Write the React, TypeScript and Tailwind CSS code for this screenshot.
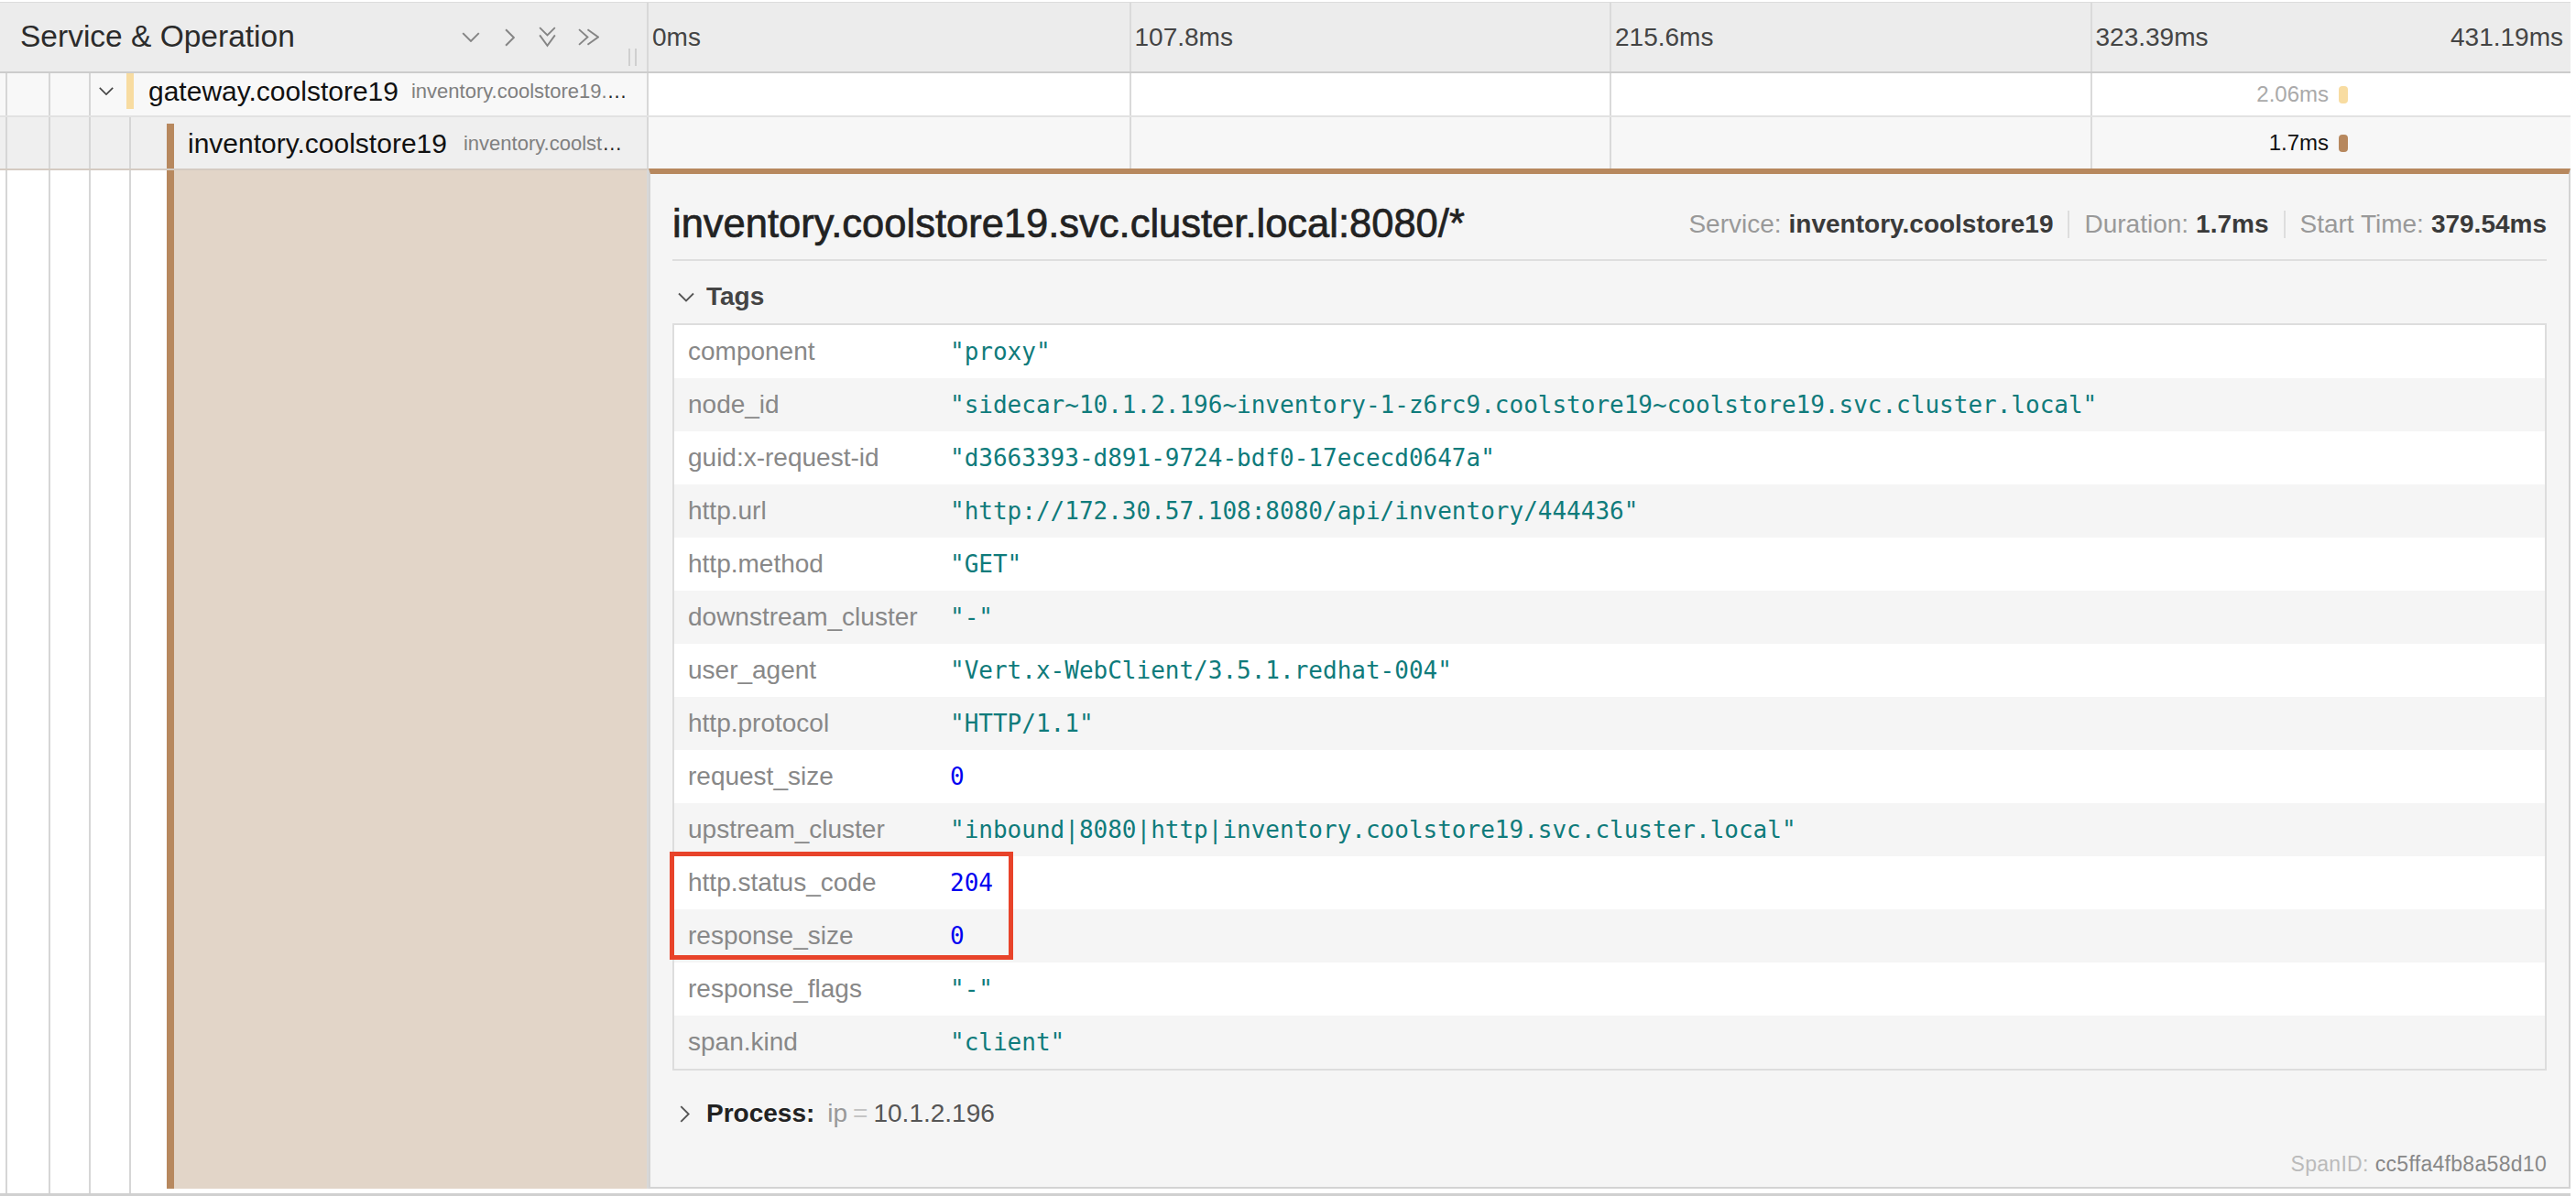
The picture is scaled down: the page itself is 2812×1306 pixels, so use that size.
import React from 'react'

type Tag = { k: string; v: string; num?: boolean }

const TAGS: Tag[] = [
  { k: 'component', v: '"proxy"' },
  { k: 'node_id', v: '"sidecar~10.1.2.196~inventory-1-z6rc9.coolstore19~coolstore19.svc.cluster.local"' },
  { k: 'guid:x-request-id', v: '"d3663393-d891-9724-bdf0-17ececd0647a"' },
  { k: 'http.url', v: '"http://172.30.57.108:8080/api/inventory/444436"' },
  { k: 'http.method', v: '"GET"' },
  { k: 'downstream_cluster', v: '"-"' },
  { k: 'user_agent', v: '"Vert.x-WebClient/3.5.1.redhat-004"' },
  { k: 'http.protocol', v: '"HTTP/1.1"' },
  { k: 'request_size', v: '0', num: true },
  { k: 'upstream_cluster', v: '"inbound|8080|http|inventory.coolstore19.svc.cluster.local"' },
  { k: 'http.status_code', v: '204', num: true },
  { k: 'response_size', v: '0', num: true },
  { k: 'response_flags', v: '"-"' },
  { k: 'span.kind', v: '"client"' },
]

const TICKS = ['0ms', '107.8ms', '215.6ms', '323.39ms']

function ChevronDown({ className }: { className?: string }) {
  return (
    <svg viewBox="0 0 18 10" className={className} fill="none" stroke="currentColor" strokeWidth={1.8}>
      <polyline points="1,1 9,9 17,1" />
    </svg>
  )
}

function ChevronRight({ className }: { className?: string }) {
  return (
    <svg viewBox="0 0 10 18" className={className} fill="none" stroke="currentColor" strokeWidth={1.8}>
      <polyline points="1,1 9,9 1,17" />
    </svg>
  )
}

function DoubleDown({ className }: { className?: string }) {
  return (
    <svg viewBox="0 0 20 22" className={className} fill="none" stroke="currentColor" strokeWidth={1.8}>
      <polyline points="2,1 10,9 18,1" />
      <polyline points="2,9 10,20 18,9" />
    </svg>
  )
}

function DoubleRight({ className }: { className?: string }) {
  return (
    <svg viewBox="0 0 22 20" className={className} fill="none" stroke="currentColor" strokeWidth={1.8}>
      <polyline points="1,2 10,10 1,18" />
      <polyline points="10,2 21,10 10,18" />
    </svg>
  )
}

function TickGrid({ labels }: { labels?: boolean }) {
  return (
    <div className="grid h-full grid-cols-4">
      {TICKS.map((t, i) => (
        <div
          key={t}
          className={
            i === 0
              ? 'flex items-center pl-[4px]'
              : 'flex items-center justify-between border-l-2 border-[#dadada] pl-[4px] pr-[8px]'
          }
        >
          {labels && <span>{t}</span>}
          {labels && i === 3 && <span>431.19ms</span>}
        </div>
      ))}
    </div>
  )
}

function SpanMarker({ label, labelColor, barColor }: { label: string; labelColor: string; barColor: string }) {
  return (
    <div className="absolute top-0 left-[1845px] flex h-full items-center">
      <span className={`absolute right-full mr-[11px] text-[24px] whitespace-nowrap ${labelColor}`}>{label}</span>
      <div className={`h-[19px] w-[10px] rounded-[4px] ${barColor}`} />
    </div>
  )
}

function Guide({ w }: { w: string }) {
  return <div className={`${w} shrink-0 border-l-2 border-[#d6d6d6]`} />
}

export default function App() {
  return (
    <div className="relative h-[1306px] w-[2812px] overflow-hidden bg-white pt-[2px] font-['Liberation_Sans',Arial,sans-serif] text-[#333]">
      <div className="w-[2806px]">
        {/* header */}
        <div className="flex h-[78px] border-t border-b-2 border-t-[#dcdcdc] border-b-[#cccccc] bg-[#ececec]">
          <div className="relative flex w-[708px] shrink-0 items-center border-r-2 border-[#d8d8d8] pl-[22px]">
            <span className="text-[33.5px] text-[#2b2b2b]">Service &amp; Operation</span>
            <div className="absolute top-0 left-[504px] flex h-full items-center text-[#858585]">
              <ChevronDown className="h-[11px] w-[20px]" />
              <ChevronRight className="ml-[27px] h-[20px] w-[11px]" />
              <DoubleDown className="ml-[25px] h-[23px] w-[21px]" />
              <DoubleRight className="ml-[23px] h-[21px] w-[23px]" />
            </div>
            <div className="absolute top-[50px] left-[686px] flex h-[19px] gap-[5px]">
              <div className="w-[2px] bg-[#cfcfcf]" />
              <div className="w-[2px] bg-[#cfcfcf]" />
            </div>
          </div>
          <div className="flex-1 text-[28px] text-[#444]">
            <TickGrid labels />
          </div>
        </div>

        {/* row 1 */}
        <div className="flex h-[48px] border-b-2 border-[#e2e2e2]">
          <div className="flex w-[708px] shrink-0 border-r-2 border-[#d8d8d8] bg-[#f8f8f8]">
            <Guide w="ml-[6px] w-[47px]" />
            <Guide w="w-[44px]" />
            <div className="w-[41px] shrink-0 border-l-2 border-[#d6d6d6] pt-[15px] pl-[8px] text-[#444]">
              <ChevronDown className="h-[9px] w-[18px]" />
            </div>
            <div className="flex h-[39px] min-w-0 flex-1 items-center border-l-[8px] border-[#f8dca1] pl-[16px] whitespace-nowrap">
              <span className="text-[30px] text-[#111]">gateway.coolstore19</span>
              <span className="ml-[14px] text-[22px] text-[#808080]">inventory.coolstore19.</span>
              <span className="text-[22px] tracking-[3px] text-[#222]">…</span>
            </div>
          </div>
          <div className="relative flex-1 bg-white">
            <TickGrid />
            <SpanMarker label="2.06ms" labelColor="text-[#aaaaaa]" barColor="bg-[#f8dca1]" />
          </div>
        </div>

        {/* row 2 */}
        <div className="flex h-[56px]">
          <div className="flex w-[708px] shrink-0 border-r-2 border-[#d8d8d8] bg-[#efefef]">
            <Guide w="ml-[6px] w-[47px]" />
            <Guide w="w-[44px]" />
            <Guide w="w-[44px]" />
            <Guide w="w-[41px]" />
            <div className="mt-[7px] flex min-w-0 flex-1 border-l-[8px] border-[#b7885e] pl-[15px] whitespace-nowrap">
              <div className="flex h-[42px] items-center">
                <span className="text-[30px] text-[#111]">inventory.coolstore19</span>
                <span className="ml-[18px] text-[22px] text-[#808080]">inventory.coolst</span>
                <span className="text-[22px] tracking-[3px] text-[#222]">…</span>
              </div>
            </div>
          </div>
          <div className="relative flex-1 bg-[#f7f7f7]">
            <TickGrid />
            <SpanMarker label="1.7ms" labelColor="text-[#111]" barColor="bg-[#b7885e]" />
          </div>
        </div>

        {/* detail row */}
        <div className="flex">
          <div className="flex w-[708px] shrink-0 border-t-2 border-r-2 border-t-[#d4cbc2] border-r-[#d8d8d8]">
            <Guide w="ml-[6px] w-[47px]" />
            <Guide w="w-[44px]" />
            <Guide w="w-[44px]" />
            <Guide w="w-[41px]" />
            <div className="flex-1 border-l-[8px] border-[#b7885e] bg-[#e2d5c8]" />
          </div>
          <div className="flex-1 border-2 border-t-[6px] border-[#d3d3d3] border-t-[#b7885e] bg-[#f5f5f5] px-[24px] pt-[24px] pb-[13px]">
            <div className="flex h-[62px] items-center justify-between whitespace-nowrap">
              <h2 className="text-[43.5px] text-[#222] [-webkit-text-stroke:0.7px_#222]">
                inventory.coolstore19.svc.cluster.local:8080/*
              </h2>
              <div className="flex items-center text-[28px]">
                <span className="text-[#999]">Service:</span>
                <span className="ml-[8px] font-bold text-[#3a3a3a]">inventory.coolstore19</span>
                <div className="mx-[16px] h-[30px] w-[2px] bg-[#dddddd]" />
                <span className="text-[#999]">Duration:</span>
                <span className="ml-[8px] font-bold text-[#3a3a3a]">1.7ms</span>
                <div className="mx-[16px] h-[30px] w-[2px] bg-[#dddddd]" />
                <span className="text-[#999]">Start Time:</span>
                <span className="ml-[8px] font-bold text-[#3a3a3a]">379.54ms</span>
              </div>
            </div>
            <div className="mt-[7px] h-[2px] bg-[#dedede]" />

            <div className="mt-[16px] flex h-[46px] items-center pl-[6px] text-[#444]">
              <ChevronDown className="h-[11px] w-[18px] text-[#555]" />
              <span className="ml-[13px] text-[28px] font-bold">Tags</span>
            </div>

            <div className="mt-[6px] border-2 border-[#dddddd] bg-white">
              {TAGS.map((t, i) => (
                <div key={t.k} className={`flex h-[58px] items-center ${i % 2 === 1 ? 'bg-[#f5f5f5]' : 'bg-white'}`}>
                  <div className="w-[301px] shrink-0 pl-[15px] text-[28px] text-[#888]">{t.k}</div>
                  <div
                    className={`font-['DejaVu_Sans_Mono',monospace] text-[26px] whitespace-pre ${
                      t.num ? 'text-[#0000f0]' : 'text-[#0f7b7b]'
                    }`}
                  >
                    {t.v}
                  </div>
                </div>
              ))}
            </div>

            <div className="mt-[24px] flex h-[46px] items-center pl-[8px] text-[28px]">
              <ChevronRight className="h-[19px] w-[11px] text-[#555]" />
              <span className="ml-[18px] font-bold text-[#222]">Process:</span>
              <span className="ml-[14px] text-[#999]">ip</span>
              <span className="px-[6px] text-[#c4c4c4]">=</span>
              <span className="text-[#555]">10.1.2.196</span>
            </div>

            <div className="mt-[20px] flex h-[24px] items-center justify-end text-[23px] tracking-[0.3px]">
              <span className="text-[#bbbbbb]">SpanID:</span>
              <span className="ml-[7px] text-[#888]">cc5ffa4fb8a58d10</span>
            </div>
          </div>
        </div>

        {/* bottom strip */}
        <div className="flex h-[8px] border-b-[3px] border-[#d0d0d0]">
          <div className="flex w-[708px] shrink-0">
            <Guide w="ml-[6px] w-[47px]" />
            <Guide w="w-[44px]" />
            <Guide w="w-[44px]" />
            <Guide w="w-[41px]" />
          </div>
        </div>
      </div>

      {/* hand-drawn annotation */}
      <div className="pointer-events-none absolute top-[930px] left-[731px] h-[118px] w-[375px] border-[5px] border-[#e8432a]" />
    </div>
  )
}
